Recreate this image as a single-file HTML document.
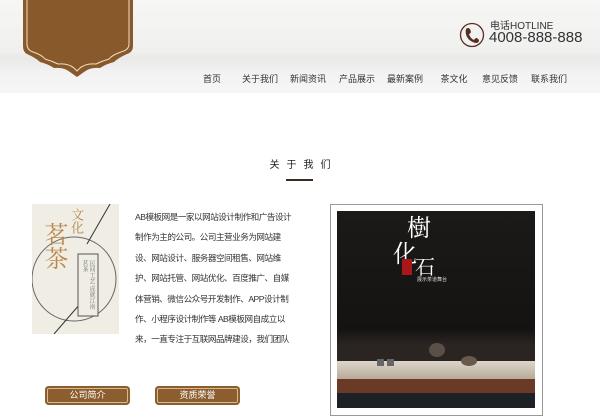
<!DOCTYPE html>
<html><head><meta charset="utf-8"><style>
*{margin:0;padding:0;box-sizing:border-box}
body{width:600px;height:417px;overflow:hidden;background:#fff;font-family:"Liberation Sans","Noto Sans CJK SC",sans-serif;position:relative}
.hdr{position:absolute;left:0;top:0;width:600px;height:93px;background:linear-gradient(#f6f6f5,#f0f0ef 55%,#e9e9e8 62%,#f3f3f3 80%,#f6f6f6)}
.nav span{position:absolute;top:72px;font-size:9px;color:#333;transform:translateX(-50%);white-space:nowrap}
.abs{position:absolute}
.txt{left:135px;top:207px;font-size:8.6px;line-height:20.4px;color:#333;white-space:nowrap;letter-spacing:-0.5px}
.btn{top:386px;width:85px;height:19px;background:#8c5d2f;border-radius:4px;color:#fff;font-size:9px;text-align:center;line-height:19px;box-shadow:inset 0 0 0 2px #8c5d2f,inset 0 0 0 3px #d9b88c}
.v{writing-mode:vertical-rl;font-family:'Noto Serif CJK SC',serif}
</style></head><body>
<div class="hdr"></div>
<svg class="abs" style="left:0;top:0" width="150" height="90">
<path d="M23 0H133V46Q133 52 127 54Q118 58 114 62Q106 64 100 68Q90 67 84 72L77 77L70 72Q64 67 54 68Q48 64 40 62Q36 58 27 54Q23 52 23 46Z" fill="#87592b"/>
<path d="M27 0V44Q27 50 33 52Q42 55 45 59Q52 61 58 64Q68 63 74 68L77 71L80 68Q86 63 96 64Q102 61 109 59Q112 55 121 52Q129 50 129 44V0" fill="none" stroke="#f1dfc2" stroke-width="1"/>
</svg>
<svg class="abs" style="left:458px;top:22px" width="28" height="28">
<circle cx="14" cy="13" r="11.5" fill="none" stroke="#5a2e20" stroke-width="1.3"/>
<path d="M8 7Q10 5 12 7L13 10Q12 12 11 12Q12 16 16 18Q17 16 19 16L21 18Q21 21 18 21Q12 20 9 15Q7 11 8 7Z" fill="#5a2e20"/>
</svg>
<div class="abs" style="left:490px;top:17px;font-size:10px;color:#333">电话HOTLINE</div>
<div class="abs" style="left:489px;top:29px;font-size:15px;color:#333">4008-888-888</div>
<div class="nav">
<span style="left:212px">首页</span><span style="left:260px">关于我们</span><span style="left:308px">新闻资讯</span><span style="left:357px">产品展示</span><span style="left:405px">最新案例</span><span style="left:454px">茶文化</span><span style="left:500px">意见反馈</span><span style="left:549px">联系我们</span>
</div>
<div class="abs" style="left:0;width:600px;top:156px;text-align:center;font-size:10px;letter-spacing:7px;padding-left:7px;color:#222">关于我们</div>
<div class="abs" style="left:286px;top:179px;width:27px;height:2px;background:#3a2a20"></div>
<div class="abs" style="left:32px;top:204px;width:87px;height:130px;background:#efede4;overflow:hidden">
<svg width="87" height="130" style="position:absolute;left:0;top:0"><circle cx="42" cy="75" r="42" fill="none" stroke="#666" stroke-width="1"/>
<line x1="78" y1="0" x2="55" y2="40" stroke="#333"/><line x1="48" y1="100" x2="22" y2="130" stroke="#333"/>
<circle cx="60" cy="97" r="3" fill="#efede4" stroke="#333"/>
<rect x="46" y="50" width="20" height="62" fill="#efede4" stroke="#555"/></svg>
<div class="abs v" style="left:38px;top:4px;font-size:13px;color:#b9884f;line-height:14px">文化</div>
<div class="abs v" style="left:12px;top:18px;font-size:24px;color:#b9884f;line-height:24px">茗茶</div>
<div class="abs v" style="left:50px;top:56px;font-size:6px;color:#777;line-height:7px;height:52px">民间工艺 成就江南茗茶</div>
</div>
<div class="abs txt">AB模板网是一家以网站设计制作和广告设计<br>制作为主的公司。公司主营业务为网站建<br>设、网站设计、服务器空间租售、网站维<br>护、网站托管、网站优化、百度推广、自媒<br>体营销、微信公众号开发制作、APP设计制<br>作、小程序设计制作等 AB模板网自成立以<br>来，一直专注于互联网品牌建设，我们团队</div>
<div class="abs btn" style="left:45px">公司简介</div>
<div class="abs btn" style="left:155px">资质荣誉</div>
<div class="abs" style="left:330px;top:204px;width:213px;height:212px;border:1px solid #999"></div>
<div class="abs" style="left:337px;top:211px;width:198px;height:197px;background:linear-gradient(#1c1a18,#151311 60%,#2b2522 68%);overflow:hidden">
<div class="abs" style="left:0;top:150px;width:198px;height:18px;background:linear-gradient(#ddd6cc,#b7aa98)"></div>
<div class="abs" style="left:0;top:168px;width:198px;height:14px;background:#6b3a26"></div>
<div class="abs" style="left:0;top:182px;width:198px;height:15px;background:#1d2024"></div>
<div class="abs" style="left:70px;top:2px;color:#fff;font-size:24px;font-family:'Noto Serif CJK SC',serif;line-height:26px">樹</div>
<div class="abs" style="left:56px;top:28px;color:#fff;font-size:24px;font-family:'Noto Serif CJK SC',serif;line-height:26px">化</div>
<div class="abs" style="left:78px;top:44px;color:#fff;font-size:20px;font-family:'Noto Serif CJK SC',serif;line-height:22px">石</div>
<div class="abs" style="left:65px;top:48px;width:10px;height:16px;background:#a81818"></div>
<div class="abs" style="left:80px;top:65px;color:#ddd;font-size:5px">展示茶道舞台</div>
<div class="abs" style="left:92px;top:132px;width:16px;height:14px;border-radius:50%;background:#5a5048"></div>
<div class="abs" style="left:124px;top:145px;width:16px;height:10px;border-radius:50%;background:#6a5a4c"></div>
<div class="abs" style="left:40px;top:148px;width:7px;height:7px;background:#666"></div>
<div class="abs" style="left:50px;top:148px;width:7px;height:7px;background:#666"></div>
</div>
</body></html>
